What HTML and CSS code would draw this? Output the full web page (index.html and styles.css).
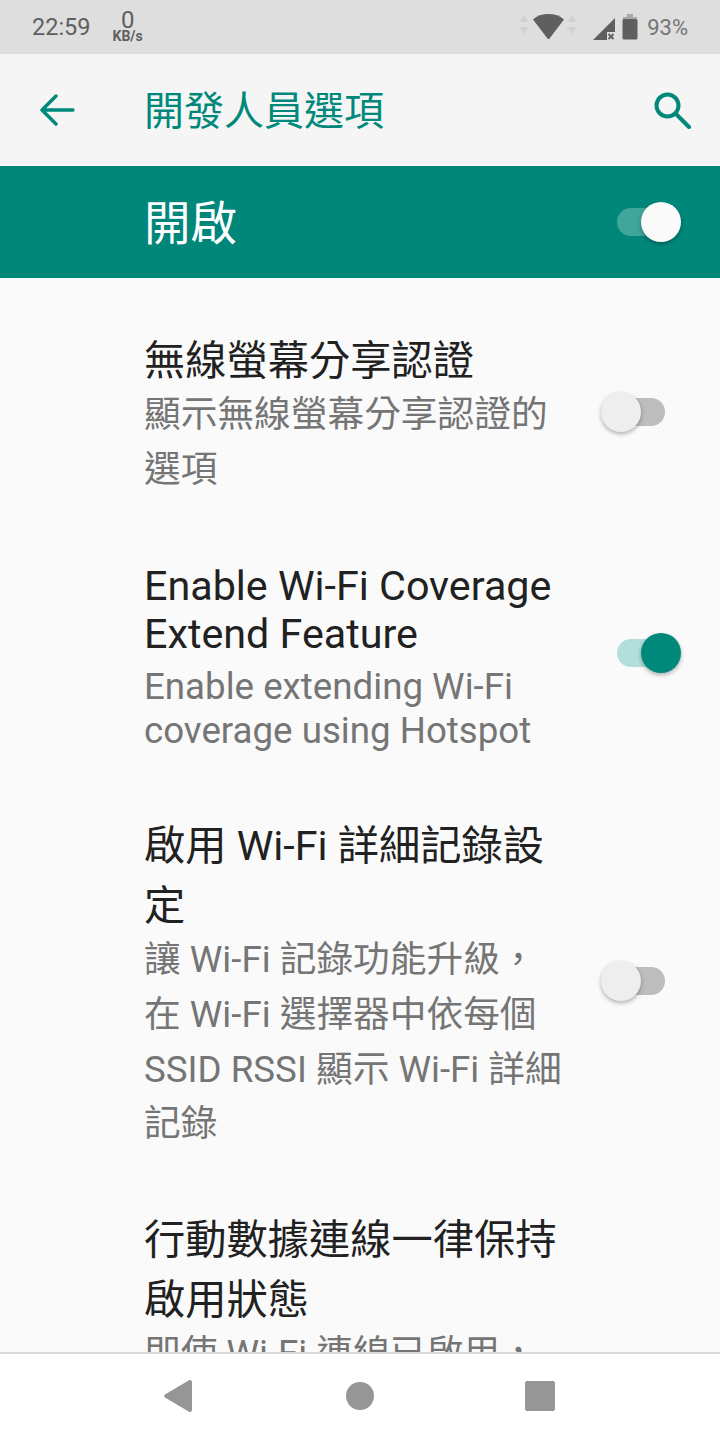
FILE: index.html
```html
<!DOCTYPE html>
<html lang="zh-Hant">
<head>
  <meta charset="UTF-8" />
  <meta name="viewport" content="width=device-width, initial-scale=1.0" />
  <title>開發人員選項</title>
  <link rel="stylesheet" href="styles.css">
</head>
<body>
  <div class="app">
    <div class="status-bar">
      <span class="clock">22:59</span>
      <div class="net-speed">
        <span class="net-value">0</span>
        <span class="net-unit">KB/s</span>
      </div>
      <div class="status-icons">
        <svg class="icon-wifi" width="58" height="28" viewBox="0 0 58 28">
          <path d="M5 2l4.500 7H.5zM5 21L.5 14h9zM53 2l4.500 7h-9zM53 21l-4.500-7h9z" fill="#d0d0d0"/>
          <path d="M14 6.500C18 2.800 23.500 1 29.500 1s11.500 1.800 15.500 5.500L30.500 25.500a1.300 1.300 0 0 1-2 0z" fill="#5f5f5f"/>
        </svg>
        <svg class="icon-signal" width="24" height="24" viewBox="0 0 24 24">
          <path d="M1 23L23 1v14h-8v8H2a1 1 0 0 1-1 0z" fill="#5f5f5f"/>
          <path d="M16.500 17l5 5M21.500 17l-5 5" stroke="#5f5f5f" stroke-width="1.800"/>
        </svg>
        <svg class="icon-battery" width="16" height="26" viewBox="0 0 16 26">
          <path d="M5 0h6v3H5z" fill="#a8a8a8"/>
          <path d="M1 3h14v3H1z" fill="#a8a8a8"/>
          <rect x="0.500" y="5" width="15" height="20.500" rx="1.500" fill="#5f5f5f"/>
        </svg>
        <span class="battery-level">93%</span>
      </div>
    </div>

    <div class="toolbar">
      <div class="toolbar-nav">
        <svg width="36" height="32" viewBox="0 0 36 32">
          <path d="M34 16H4M17 2L3 16l14 14" fill="none" stroke="#00897b" stroke-width="3.400" stroke-linecap="round" stroke-linejoin="round"/>
        </svg>
      </div>
      <h1 class="toolbar-title">開發人員選項</h1>
      <svg class="toolbar-search" width="38" height="38" viewBox="0 0 38 38">
        <circle cx="14.500" cy="14.500" r="11" fill="none" stroke="#00897b" stroke-width="4"/>
        <path d="M23 23l13 13" stroke="#00897b" stroke-width="4" stroke-linecap="round"/>
      </svg>
    </div>

    <div class="master-bar">
      <span class="master-label">開啟</span>
      <div class="switch switch-master is-on">
        <div class="switch-track"></div>
        <div class="switch-thumb"></div>
      </div>
    </div>

    <div class="settings-list">
      <div class="setting-row">
        <div class="setting-text">
          <div class="setting-title">無線螢幕分享認證</div>
          <div class="setting-summary">顯示無線螢幕分享認證的選項</div>
        </div>
        <div class="switch">
          <div class="switch-track"></div>
          <div class="switch-thumb"></div>
        </div>
      </div>

      <div class="setting-row setting-row-latin">
        <div class="setting-text">
          <div class="setting-title">Enable Wi-Fi Coverage Extend Feature</div>
          <div class="setting-summary">Enable extending Wi-Fi coverage using Hotspot</div>
        </div>
        <div class="switch is-on">
          <div class="switch-track"></div>
          <div class="switch-thumb"></div>
        </div>
      </div>

      <div class="setting-row setting-row-long">
        <div class="setting-text">
          <div class="setting-title">啟用 Wi-Fi 詳細記錄設定</div>
          <div class="setting-summary">讓 Wi-Fi 記錄功能升級，在 Wi-Fi 選擇器中依每個 SSID RSSI 顯示 Wi-Fi 詳細記錄</div>
        </div>
        <div class="switch">
          <div class="switch-track"></div>
          <div class="switch-thumb"></div>
        </div>
      </div>

      <div class="setting-row">
        <div class="setting-text">
          <div class="setting-title">行動數據連線一律保持啟用狀態</div>
          <div class="setting-summary">即使 Wi-Fi 連線已啟用，</div>
        </div>
      </div>
    </div>

    <div class="nav-bar">
      <svg width="28" height="32" viewBox="0 0 28 32">
        <path d="M28 2v28a2 2 0 0 1-3 1.700L1 17.500a1.800 1.800 0 0 1 0-3L25 .300A2 2 0 0 1 28 2z" fill="#969696"/>
      </svg>
      <svg class="nav-home" width="28" height="28" viewBox="0 0 28 28">
        <circle cx="14" cy="14" r="14" fill="#969696"/>
      </svg>
      <svg width="30" height="30" viewBox="0 0 30 30">
        <rect width="30" height="30" rx="2" fill="#969696"/>
      </svg>
    </div>
  </div>
</body>
</html>
```

FILE: styles.css
```css
* {
  box-sizing: border-box;
}

body {
  margin: 0;
  background-color: #fafafa;
  font-family: Roboto, "Noto Sans CJK TC", sans-serif;
}

.app {
  width: 720px;
  height: 1440px;
  display: flex;
  flex-direction: column;
  overflow: hidden;
}

/* Status bar */
.status-bar {
  height: 54px;
  flex: none;
  display: flex;
  align-items: center;
  padding: 0 32px;
  background-color: #dedede;
  color: #5f5f5f;
}

.clock {
  font-size: 23.500px;
}

.net-speed {
  margin-left: 22px;
  display: flex;
  flex-direction: column;
  align-items: center;
}

.net-value {
  font-size: 24px;
  line-height: 19px;
}

.net-unit {
  font-size: 14px;
  line-height: 13px;
  font-weight: 700;
}

.status-icons {
  margin-left: auto;
  display: flex;
  align-items: center;
}

.icon-wifi {
  margin-right: 15px;
}

.icon-signal {
  margin-top: 3px;
  margin-right: 6px;
}

.battery-level {
  margin-left: 9px;
  font-size: 22px;
  color: #757575;
}

/* Toolbar */
.toolbar {
  height: 112px;
  flex: none;
  display: flex;
  align-items: center;
  padding-right: 29px;
  background-color: #f5f5f5;
}

.toolbar-nav {
  width: 144px;
  flex: none;
  padding-left: 39px;
  display: flex;
  align-items: center;
}

.toolbar-title {
  flex: 1;
  margin: 0;
  padding-bottom: 4px;
  font-size: 40px;
  font-weight: 400;
  color: #00897b;
}

/* Master switch */
.master-bar {
  height: 112px;
  flex: none;
  display: flex;
  align-items: center;
  justify-content: space-between;
  padding: 0 39px 0 144px;
  background-color: #00877a;
}

.master-label {
  padding-bottom: 6px;
  font-size: 46.500px;
  color: #fff;
}

.switch {
  position: relative;
  width: 80px;
  height: 40px;
  flex: none;
  display: flex;
  align-items: center;
  padding: 0 16px;
}

.switch-track {
  width: 100%;
  height: 28px;
  border-radius: 14px;
  background-color: #bdbdbd;
}

.switch-thumb {
  position: absolute;
  top: 0;
  left: 0;
  width: 40px;
  height: 40px;
  border-radius: 50%;
  background-color: #eee;
  box-shadow: 0 2px 4px rgba(0, 0, 0, 0.3);
}

.switch.is-on .switch-track {
  background-color: #b2dfdb;
}

.switch.is-on .switch-thumb {
  left: auto;
  right: 0;
  background-color: #00897b;
}

.switch-master.is-on .switch-track {
  background-color: #40a59b;
}

.switch-master.is-on .switch-thumb {
  background-color: #fafafa;
}

/* Settings rows */
.settings-list {
  flex: 1;
  min-height: 0;
  overflow: hidden;
  padding-top: 17px;
  background-color: #fafafa;
}

.setting-row {
  display: flex;
  align-items: center;
  justify-content: space-between;
  padding: 32px 39px 33px 144px;
}

.setting-row-latin {
  padding-bottom: 27px;
}

.setting-row-latin .setting-summary {
  margin-top: 7px;
  line-height: 44px;
}

.setting-row-latin .switch {
  margin-top: -10px;
}

.setting-row-long {
  padding-bottom: 22px;
}

.setting-row-long .switch {
  margin-top: -2px;
}

.setting-text {
  width: 420px;
  flex: none;
}

.setting-title {
  font-size: 41.250px;
  color: #212121;
}

.setting-summary {
  margin-top: 1px;
  font-size: 36.700px;
  line-height: 54.670px;
  color: #757575;
}

/* Navigation bar */
.nav-bar {
  height: 88px;
  flex: none;
  display: flex;
  align-items: center;
  justify-content: space-between;
  padding: 0 165px 2px 164px;
  background-color: #fff;
  border-top: 2px solid #d9d9d9;
}

.nav-home {
  margin-left: 3px;
}
```
